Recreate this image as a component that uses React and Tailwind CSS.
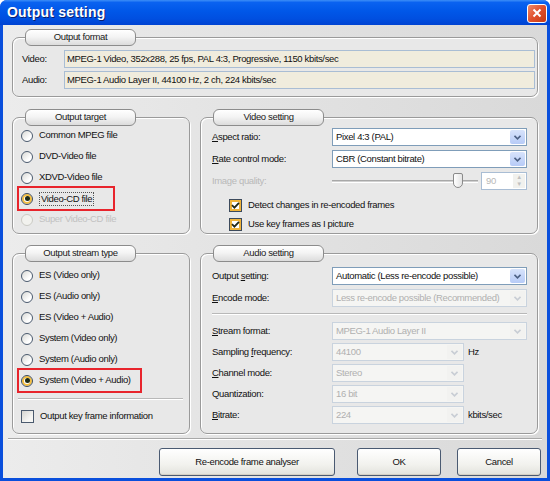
import React from 'react';

const Tab = ({ children }) => (
  <div className="absolute top-[-9px] left-[12px] w-[111px] h-[17px] rounded-[6px] border border-[#8c8c8c] bg-[linear-gradient(to_bottom,#ffffff_0%,#f4f4f4_45%,#dcdcdc_100%)] flex items-center justify-center text-[#1a1a1a]">
    {children}
  </div>
);

const Group = ({ title, className = '', children }) => (
  <div
    className={`relative rounded-[7px] border border-[#9a9a9a] shadow-[inset_1px_1px_0_#ffffff,1px_1px_0_#ffffff] bg-[#e8e8e8] ${className}`}
  >
    <Tab>{title}</Tab>
    {children}
  </div>
);

const Radio = ({ checked, disabled, label }) => (
  <div className="flex items-center h-[21px] gap-[6px]">
    <span
      className={
        disabled
          ? 'w-[12px] h-[12px] rounded-full border border-[#cacac4] bg-[#f2f2ee]'
          : checked
          ? 'w-[12px] h-[12px] rounded-full border border-[#3c4a5c] bg-white shadow-[inset_0_0_0_2px_#f5c040] flex items-center justify-center'
          : 'w-[12px] h-[12px] rounded-full border border-[#4a5a6e] bg-[linear-gradient(135deg,#d8d8d4,#ffffff_70%)]'
      }
    >
      {checked && <span className="w-[5px] h-[5px] rounded-full bg-[#1d2a14]" />}
    </span>
    <span className={disabled ? 'text-[#c2c2c2]' : 'text-[#111]'}>{label}</span>
  </div>
);

const Check = ({ checked, label }) => (
  <div className="flex items-center h-[19px] gap-[6px]">
    <span
      className={
        checked
          ? 'w-[13px] h-[13px] border border-[#3c4a5c] bg-white shadow-[inset_0_0_0_2px_#f0b43a] flex items-center justify-center'
          : 'w-[13px] h-[13px] border border-[#4a5a6e] bg-[linear-gradient(135deg,#d4d4d0,#f6f6f4_70%)]'
      }
    >
      {checked && (
        <svg width="9" height="9" viewBox="0 0 9 9">
          <path d="M1 4.2 L3.4 6.6 L8 1.8" stroke="#20281a" strokeWidth="1.8" fill="none" />
        </svg>
      )}
    </span>
    <span className="text-[#111]">{label}</span>
  </div>
);

const Chevron = ({ disabled }) => (
  <svg width="7" height="5" viewBox="0 0 7 5">
    <path
      d="M0.5 0.8 L3.5 3.8 L6.5 0.8"
      stroke={disabled ? '#c8cdd4' : '#4d6185'}
      strokeWidth="1.6"
      fill="none"
    />
  </svg>
);

const Select = ({ value, disabled, className = 'w-[195px]' }) => (
  <div
    className={
      disabled
        ? `${className} h-[18px] border border-[#c9d3de] bg-[#f5f5f3] flex items-center justify-between pl-[3px] pr-[1px]`
        : `${className} h-[18px] border border-[#7f9db9] bg-white flex items-center justify-between pl-[3px] pr-[1px]`
    }
  >
    <span className={disabled ? 'text-[#b0b0b0] whitespace-nowrap' : 'text-[#111] whitespace-nowrap'}>{value}</span>
    <span
      className={
        disabled
          ? 'w-[15px] h-[14px] flex items-center justify-center bg-[#f2f2f0]'
          : 'w-[15px] h-[14px] flex items-center justify-center rounded-[2px] bg-[linear-gradient(to_bottom,#d7e3fb,#b7cbf7)]'
      }
    >
      <Chevron disabled={disabled} />
    </span>
  </div>
);

const Button = ({ children, className = '' }) => (
  <button
    className={`h-[28px] rounded-[3px] border border-[#4a5a72] bg-[linear-gradient(to_bottom,#ffffff,#f2f2ee_60%,#e2e2dc)] text-[#111] shadow-[inset_0_-1px_0_#d6d0c5] ${className}`}
  >
    {children}
  </button>
);

export default function App() {
  return (
    <div className="w-[550px] h-[481px] bg-[#0a4fdc] rounded-t-[7px] flex flex-col overflow-hidden font-['Liberation_Sans',Arial,sans-serif] text-[9.5px] tracking-[-0.35px]">
      {/* title bar */}
      <div className="h-[25px] shrink-0 flex items-center justify-between pl-[7px] pr-[3px] bg-[linear-gradient(to_bottom,#3d8ef7_0%,#0a62f0_10%,#0057e8_45%,#004fe0_75%,#0043d2_100%)]">
        <span className="text-white font-bold text-[14px] tracking-[0.2px] [text-shadow:1px_1px_0_#0a1f6e]">Output setting</span>
        <span className="w-[20px] h-[19px] mt-[1px] rounded-[3px] border border-white bg-[linear-gradient(135deg,#f08a6a,#e0502c_50%,#c63a14)] flex items-center justify-center">
          <svg width="10" height="10" viewBox="0 0 10 10">
            <path d="M1.5 1.5 L8.5 8.5 M8.5 1.5 L1.5 8.5" stroke="#fff" strokeWidth="2" />
          </svg>
        </span>
      </div>

      {/* body */}
      <div className="flex-1 mx-[3px] mb-[3px] bg-[linear-gradient(to_right,#ececec,#e2e2e2_50%,#d9d9d9)] px-[9px] pt-[12px] flex flex-col">
        <Group title="Output format" className="h-[60px] pt-[12px] pl-[9px] pr-[2px]">
          <div className="flex flex-col gap-[3px]">
            <div className="flex items-center">
              <span className="w-[42px] text-[#111]">Video:</span>
              <div className="flex-1 h-[18px] border border-[#a9bdd4] bg-[#f0ecdd] flex items-center pl-[2px] text-[#111]">
                MPEG-1 Video, 352x288, 25 fps, PAL 4:3, Progressive, 1150 kbits/sec
              </div>
            </div>
            <div className="flex items-center">
              <span className="w-[42px] text-[#111]">Audio:</span>
              <div className="flex-1 h-[18px] border border-[#a9bdd4] bg-[#f0ecdd] flex items-center pl-[2px] text-[#111]">
                MPEG-1 Audio Layer II, 44100 Hz, 2 ch, 224 kbits/sec
              </div>
            </div>
          </div>
        </Group>

        <div className="grid grid-cols-[178px_338px] gap-[10px] mt-[20px]">
          <Group title="Output target" className="h-[117px] pt-[7px] pl-[8px]">
            <Radio label="Common MPEG file" />
            <Radio label="DVD-Video file" />
            <Radio label="XDVD-Video file" />
            <div className="w-[94px] -ml-[2px] pl-[2px] ring-2 ring-[#e8242c] flex items-center h-[21px] gap-[6px]">
              <span className="w-[12px] h-[12px] rounded-full border border-[#3c4a5c] bg-white shadow-[inset_0_0_0_2px_#f5c040] flex items-center justify-center">
                <span className="w-[5px] h-[5px] rounded-full bg-[#1d2a14]" />
              </span>
              <span className="text-[#111] border border-dotted border-[#555] px-[1px] leading-[12px]">Video-CD file</span>
            </div>
            <Radio label="Super Video-CD file" disabled />
          </Group>

          <Group title="Video setting" className="h-[117px] pt-[10px] pl-[11px] pr-[10px]">
            <div className="flex flex-col gap-[4px]">
              <div className="flex items-center">
                <span className="w-[120px] text-[#111]"><u>A</u>spect ratio:</span>
                <Select value="Pixel 4:3 (PAL)" />
              </div>
              <div className="flex items-center">
                <span className="w-[120px] text-[#111]"><u>R</u>ate control mode:</span>
                <Select value="CBR (Constant bitrate)" />
              </div>
              <div className="flex items-center h-[18px]">
                <span className="w-[120px] text-[#b8b8b8]">Image quality:</span>
                <div className="w-[146px] h-[18px] relative flex items-center">
                  <div className="w-full h-[3px] border-t border-[#a8a8a8] border-b border-b-white bg-[#d0d0d0]" />
                  <div className="absolute left-[121px] top-[1px] w-[10px] h-[15px] rounded-t-[2px] rounded-b-[5px] border border-[#8a8a8a] bg-[linear-gradient(to_right,#ffffff,#e4e4e4)]" />
                </div>
                <div className="ml-[3px] w-[46px] h-[18px] border border-[#a9bdd4] bg-white flex items-center justify-between pl-[4px] pr-[1px]">
                  <span className="text-[#b8b8b8]">90</span>
                  <span className="w-[12px] h-[14px] flex flex-col items-center justify-center bg-[#f1f1ee] text-[#c0c0c0] text-[6px] leading-[7px]">
                    <span>▲</span>
                    <span>▼</span>
                  </span>
                </div>
              </div>
            </div>
            <div className="mt-[6px] ml-[17px]">
              <Check checked label="Detect changes in re-encoded frames" />
              <Check checked label="Use key frames as I picture" />
            </div>
          </Group>
        </div>

        <div className="grid grid-cols-[178px_338px] gap-[10px] mt-[19px]">
          <Group title="Output stream type" className="h-[181px] pt-[11px] pl-[8px] pr-[6px]">
            <Radio label="ES (Video only)" />
            <Radio label="ES (Audio only)" />
            <Radio label="ES (Video + Audio)" />
            <Radio label="System (Video only)" />
            <Radio label="System (Audio only)" />
            <div className="w-[121px] -ml-[2px] pl-[2px] ring-2 ring-[#e8242c] flex items-center h-[21px] gap-[6px]">
              <span className="w-[12px] h-[12px] rounded-full border border-[#3c4a5c] bg-white shadow-[inset_0_0_0_2px_#f5c040] flex items-center justify-center">
                <span className="w-[5px] h-[5px] rounded-full bg-[#1d2a14]" />
              </span>
              <span className="text-[#111]">System (Video + Audio)</span>
            </div>
            <div className="mt-[7px] -ml-[3px] h-[2px] border-t border-[#b8b8b8] border-b border-b-white" />
            <div className="mt-[7px]">
              <Check label="Output key frame information" />
            </div>
          </Group>

          <Group title="Audio setting" className="h-[181px] pt-[13px] pl-[11px] pr-[10px]">
            <div className="flex flex-col gap-[4px]">
              <div className="flex items-center">
                <span className="w-[120px] text-[#111]">Output <u>s</u>etting:</span>
                <Select value="Automatic (Less re-encode possible)" />
              </div>
              <div className="flex items-center">
                <span className="w-[120px] text-[#111]"><u>E</u>ncode mode:</span>
                <Select value="Less re-encode possible (Recommended)" disabled />
              </div>
            </div>
            <div className="mt-[6px] h-[2px] border-t border-[#b8b8b8] border-b border-b-white" />
            <div className="mt-[7px] flex flex-col gap-[3px]">
              <div className="flex items-center">
                <span className="w-[120px] text-[#111]"><u>S</u>tream format:</span>
                <Select value="MPEG-1 Audio Layer II" disabled />
              </div>
              <div className="flex items-center">
                <span className="w-[120px] text-[#111]">Sampling <u>f</u>requency:</span>
                <Select value="44100" disabled className="w-[132px]" />
                <span className="ml-[4px] text-[#111]">Hz</span>
              </div>
              <div className="flex items-center">
                <span className="w-[120px] text-[#111]"><u>C</u>hannel mode:</span>
                <Select value="Stereo" disabled className="w-[132px]" />
              </div>
              <div className="flex items-center">
                <span className="w-[120px] text-[#111]">Quantization:</span>
                <Select value="16 bit" disabled className="w-[132px]" />
              </div>
              <div className="flex items-center">
                <span className="w-[120px] text-[#111]"><u>B</u>itrate:</span>
                <Select value="224" disabled className="w-[132px]" />
                <span className="ml-[4px] text-[#111]">kbits/sec</span>
              </div>
            </div>
          </Group>
        </div>

        <div className="mt-[4px] -mx-[4px] h-[2px] border-t border-[#a8a8a8] border-b border-b-white" />

        <div className="flex justify-end mt-[8px] -mr-[3px]">
          <Button className="w-[176px]">Re-encode frame analyser</Button>
          <Button className="w-[84px] ml-[22px]">OK</Button>
          <Button className="w-[84px] ml-[16px]">Cancel</Button>
        </div>
      </div>
    </div>
  );
}
